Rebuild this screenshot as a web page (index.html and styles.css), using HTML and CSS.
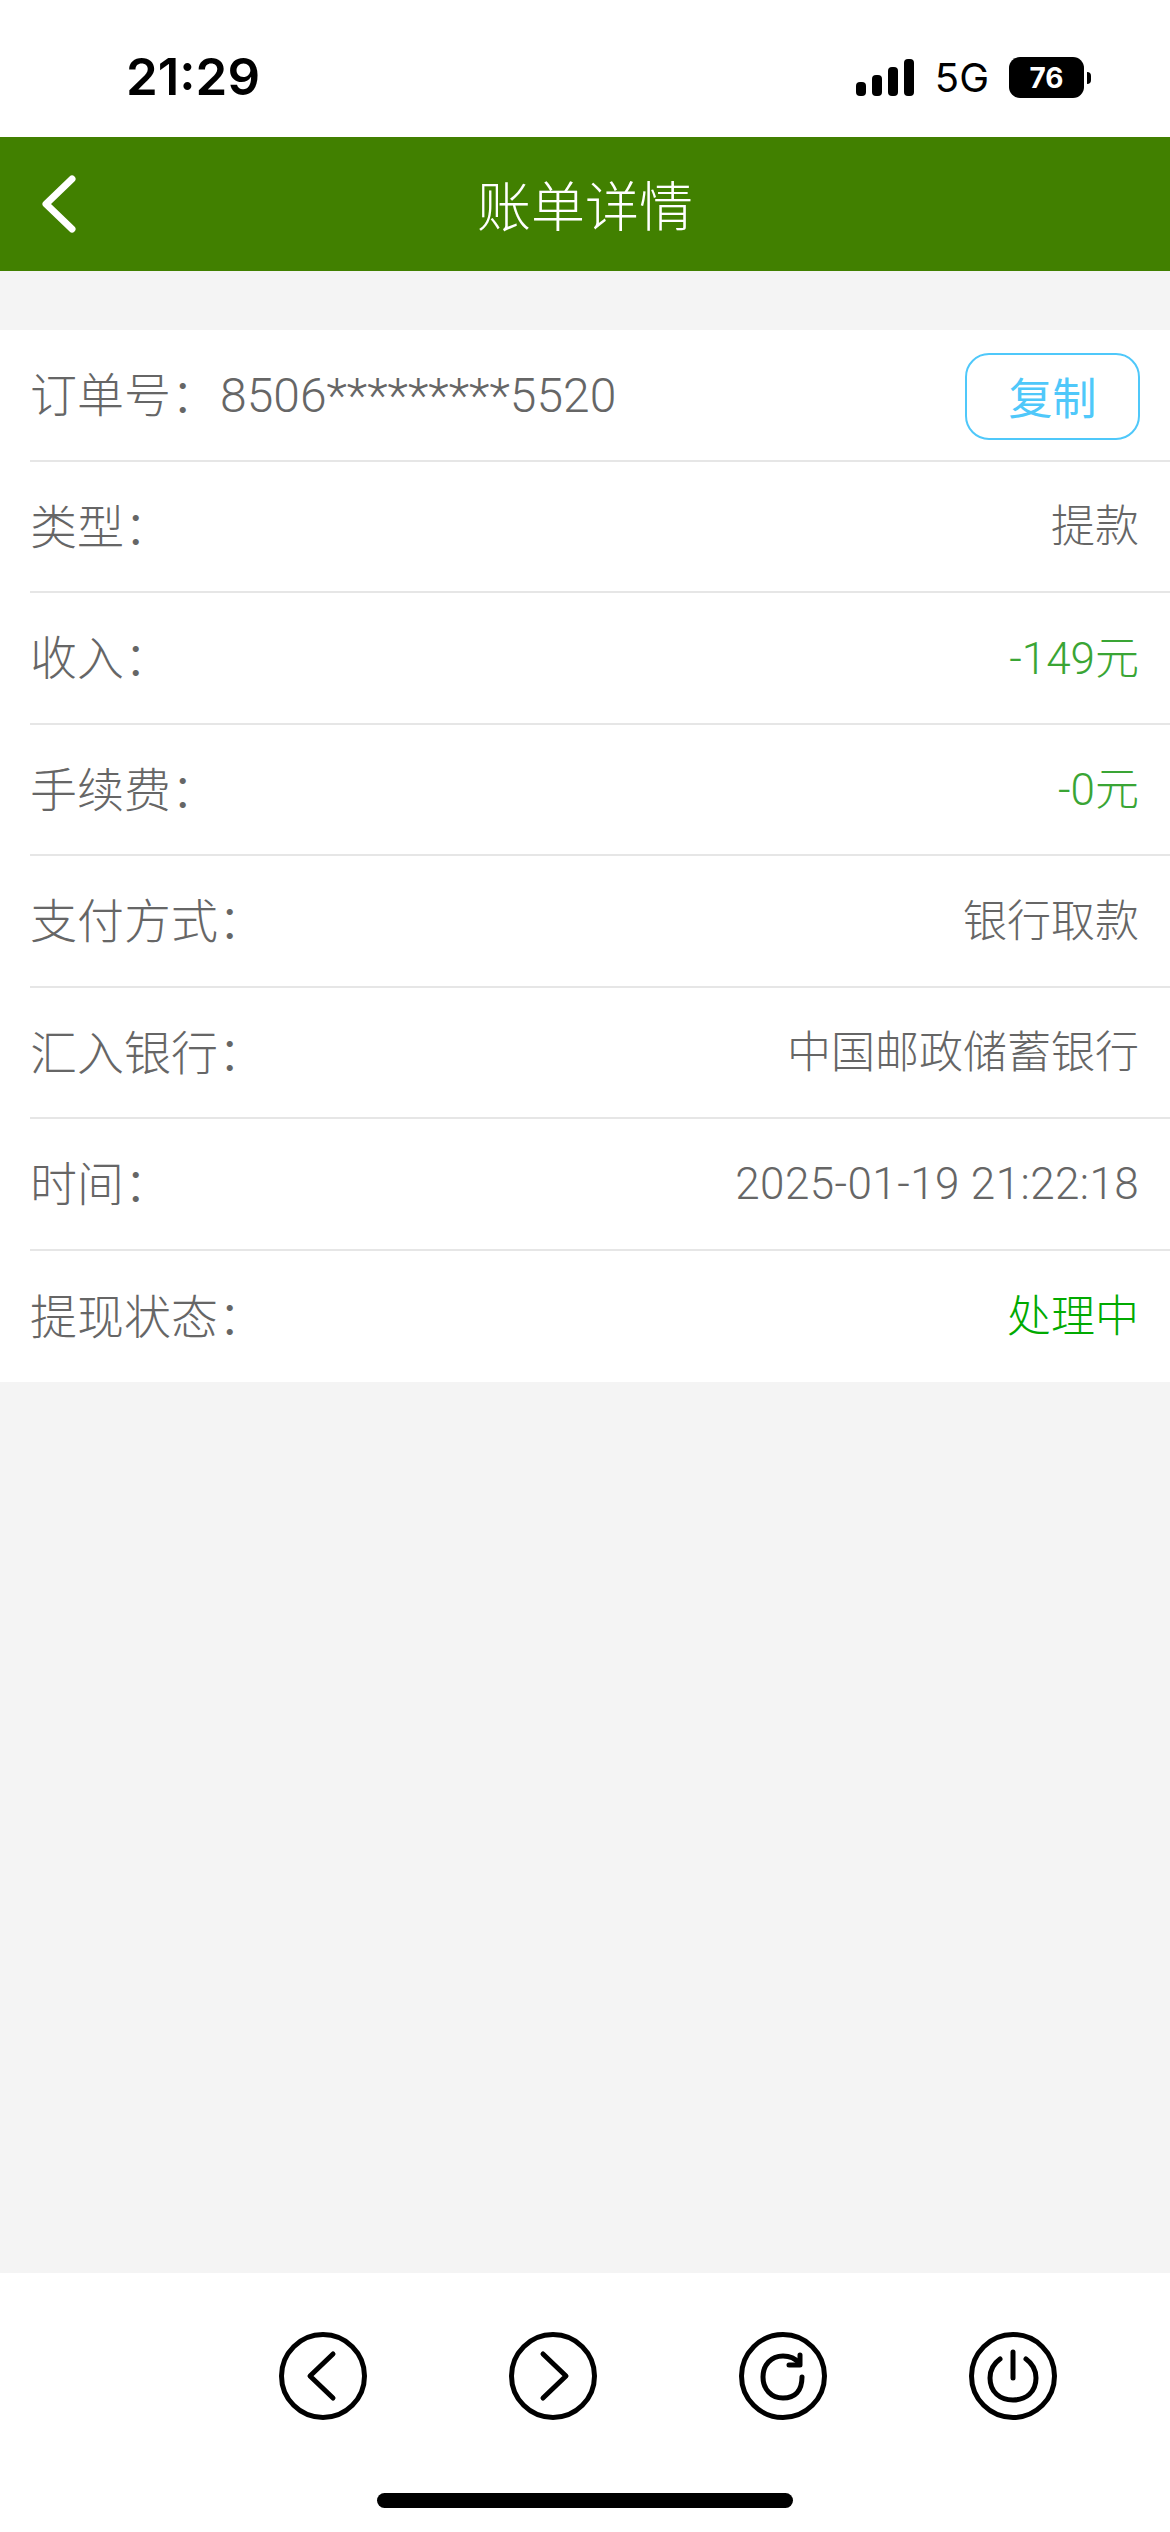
FILE: index.html
```html
<!DOCTYPE html>
<html lang="zh-CN">
<head>
  <meta charset="UTF-8">
  <meta name="viewport" content="width=device-width, initial-scale=1.0">
  <title>账单详情</title>
  <link rel="stylesheet" href="styles.css">
</head>
<body>
  <div class="phone">
    <!-- Status bar -->
    <div class="status-bar">
      <span class="clock">21:29</span>
      <div class="status-right">
        <svg class="signal" width="58" height="37" viewBox="0 0 58 37">
          <rect x="0" y="23" width="10" height="14" rx="4"/>
          <rect x="16" y="16" width="10" height="21" rx="4"/>
          <rect x="32" y="8" width="10" height="29" rx="4"/>
          <rect x="48" y="0" width="10" height="37" rx="4"/>
        </svg>
        <span class="network">5G</span>
        <div class="battery"><span>76</span></div>
        <div class="battery-nub"></div>
      </div>
    </div>

    <!-- Title bar -->
    <div class="title-bar">
      <svg class="back" width="34" height="58" viewBox="0 0 34 58">
        <path d="M30 4 L4 29 L30 54"/>
      </svg>
      <h1>账单详情</h1>
    </div>

    <!-- Bill details -->
    <div class="content">
      <ul class="detail-list">
        <li class="detail-row">
          <div class="order"><span>订单号：</span><span class="order-no">8506*********5520</span></div>
          <button class="copy">复制</button>
        </li>
        <li class="detail-row"><span>类型：</span><span class="value">提款</span></li>
        <li class="detail-row"><span>收入：</span><span class="value amount">-149元</span></li>
        <li class="detail-row"><span>手续费：</span><span class="value amount">-0元</span></li>
        <li class="detail-row"><span>支付方式：</span><span class="value">银行取款</span></li>
        <li class="detail-row"><span>汇入银行：</span><span class="value">中国邮政储蓄银行</span></li>
        <li class="detail-row"><span>时间：</span><span class="value time">2025-01-19 21:22:18</span></li>
        <li class="detail-row"><span>提现状态：</span><span class="value state">处理中</span></li>
      </ul>
    </div>

    <!-- Browser toolbar -->
    <div class="toolbar">
      <div class="tools">
        <svg class="tool" viewBox="0 0 88 88">
          <circle cx="44" cy="44" r="41.5"/>
          <path d="M54 22 L31 44 L54 66"/>
        </svg>
        <svg class="tool" viewBox="0 0 88 88">
          <circle cx="44" cy="44" r="41.5"/>
          <path d="M34 22 L57 44 L34 66"/>
        </svg>
        <svg class="tool" viewBox="0 0 88 88">
          <circle cx="44" cy="44" r="41.5"/>
          <path d="M63 45 C63 59 56 66 44 66 C32 66 24 57 24 45 C24 33 32 24 44 24 C51 24 56 26 60 31"/>
          <path d="M61 23 L61 33 L50 33"/>
        </svg>
        <svg class="tool" viewBox="0 0 88 88">
          <circle cx="44" cy="44" r="41.5"/>
          <path d="M31 27 C24 32 21 38 21 46 C21 60 31 68 44 68 C57 68 67 60 67 46 C67 38 64 32 57 27"/>
          <path d="M44 20 L44 46"/>
        </svg>
      </div>
      <div class="home-bar"></div>
    </div>
  </div>
</body>
</html>
```

FILE: styles.css
```css
* {
  box-sizing: border-box;
}

html,
body {
  margin: 0;
  padding: 0;
}

body {
  font-family: Roboto, "Noto Sans CJK SC", sans-serif;
  font-weight: 300;
  color: #666666;
}

.phone {
  width: 1170px;
  height: 2532px;
  display: flex;
  flex-direction: column;
  background-color: #f4f4f4;
}

.status-bar {
  height: 137px;
  flex: none;
  display: flex;
  justify-content: space-between;
  align-items: flex-start;
  padding: 47px 79px 0 126px;
  background-color: #ffffff;
  color: #000000;
}

.clock {
  font-family: Inter, sans-serif;
  font-size: 51px;
  font-weight: 600;
  line-height: 60px;
}

.status-right {
  display: flex;
  align-items: center;
  margin-top: 10px;
}

.signal {
  fill: #000000;
  margin-right: 21px;
}

.network {
  font-family: Inter, sans-serif;
  font-size: 40px;
  font-weight: 400;
  line-height: 41px;
  margin-right: 20px;
}

.battery {
  width: 75px;
  height: 41px;
  border-radius: 11px;
  background-color: #000000;
  color: #ffffff;
  display: flex;
  justify-content: center;
  align-items: center;
  font-family: Inter, sans-serif;
  font-size: 28px;
  font-weight: 700;
}

.battery-nub {
  width: 4px;
  height: 12px;
  margin-left: 3px;
  border-radius: 0 6px 6px 0;
  background-color: #000000;
}

.title-bar {
  height: 134px;
  flex: none;
  display: flex;
  justify-content: center;
  align-items: center;
  position: relative;
  background-color: #418000;
  color: #ffffff;
}

.title-bar h1 {
  margin: 0 0 2px;
  font-size: 54px;
  font-weight: 300;
}

.back {
  position: absolute;
  left: 42px;
  top: 38px;
  fill: none;
  stroke: #ffffff;
  stroke-width: 7;
  stroke-linecap: round;
  stroke-linejoin: round;
}

.content {
  flex: 1;
  padding-top: 59px;
}

.detail-list {
  list-style-type: none;
  margin: 0;
  padding: 0 0 0 30px;
  background-color: #ffffff;
}

.detail-row {
  height: 131.5px;
  display: flex;
  justify-content: space-between;
  align-items: center;
  padding: 0 31px 6px 0;
  border-bottom: 2px solid #e6e6e6;
  font-size: 47px;
}

.detail-row:last-child {
  border-bottom: none;
}

.order {
  display: flex;
  align-items: baseline;
}

.order-no {
  font-size: 48px;
  margin-left: 2px;
}

.value {
  font-size: 44px;
}

.time {
  margin-top: 6px;
  letter-spacing: 0.4px;
}

.copy {
  width: 175px;
  height: 87px;
  margin: 9px -1px 0 0;
  padding: 0;
  border: 2px solid #4fc8fa;
  border-radius: 24px;
  background-color: #ffffff;
  color: #4fc8fa;
  font-family: inherit;
  font-size: 44px;
  font-weight: 400;
}

.amount {
  color: #3aa535;
}

.state {
  color: #00aa00;
}

.toolbar {
  height: 259px;
  flex: none;
  background-color: #ffffff;
  display: flex;
  flex-direction: column;
  align-items: center;
}

.tools {
  width: 100%;
  display: flex;
  gap: 142px;
  padding: 59px 0 0 279px;
}

.tool {
  width: 88px;
  height: 88px;
  fill: none;
  stroke: #000000;
  stroke-width: 5;
  stroke-linecap: round;
  stroke-linejoin: round;
}

.home-bar {
  width: 416px;
  height: 15px;
  margin-top: 73px;
  border-radius: 8px;
  background-color: #000000;
}
```
